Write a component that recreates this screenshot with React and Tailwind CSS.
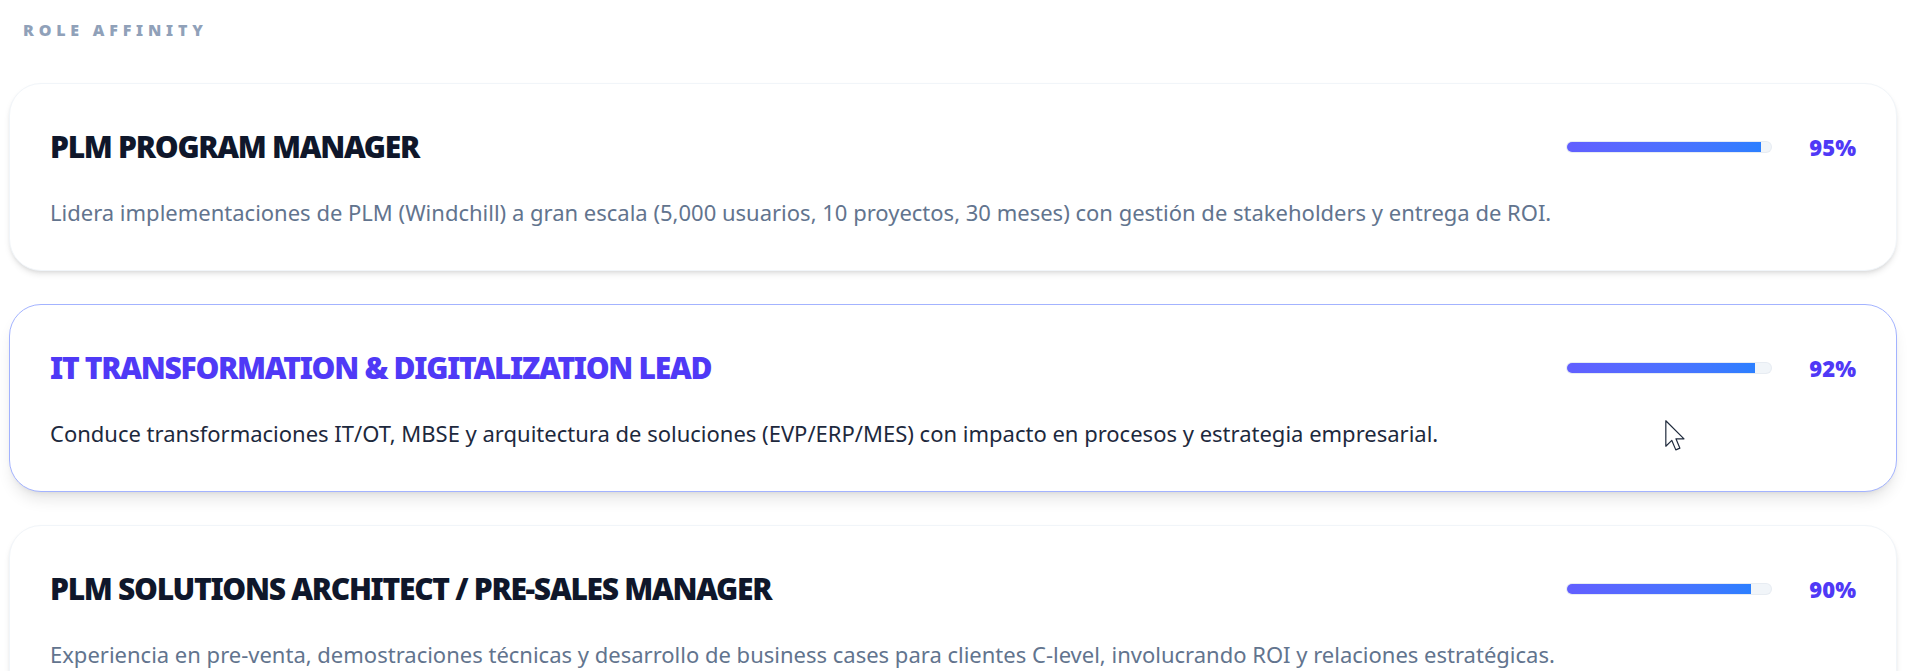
import React from "react";

const roles = [
  {
    title: "PLM PROGRAM MANAGER",
    desc: "Lidera implementaciones de PLM (Windchill) a gran escala (5,000 usuarios, 10 proyectos, 30 meses) con gestión de stakeholders y entrega de ROI.",
    pct: 95,
    active: false,
  },
  {
    title: "IT TRANSFORMATION & DIGITALIZATION LEAD",
    desc: "Conduce transformaciones IT/OT, MBSE y arquitectura de soluciones (EVP/ERP/MES) con impacto en procesos y estrategia empresarial.",
    pct: 92,
    active: true,
  },
  {
    title: "PLM SOLUTIONS ARCHITECT / PRE-SALES MANAGER",
    desc: "Experiencia en pre-venta, demostraciones técnicas y desarrollo de business cases para clientes C-level, involucrando ROI y relaciones estratégicas.",
    pct: 90,
    active: false,
  },
];

function Cursor() {
  return (
    <svg
      className="absolute left-[1655px] top-[115px] pointer-events-none"
      width="20"
      height="31"
      viewBox="0 0 12.6 19.6"
    >
      <path
        d="M0.5 0.5 L0.5 16.6 L4.3 12.9 L6.8 18.9 L9.4 17.8 L6.9 11.9 L12 11.9 Z"
        fill="#ffffff"
        stroke="#1e293b"
        strokeWidth="0.75"
        strokeLinejoin="round"
      />
    </svg>
  );
}

function RoleCard({ role }) {
  return (
    <div
      className={
        role.active
          ? "relative rounded-[32px] border border-indigo-300 bg-white px-10 pt-[45px] pb-[42px] shadow-lg"
          : "relative rounded-[32px] border border-slate-100 bg-white px-10 pt-[45px] pb-[42px] shadow-md"
      }
    >
      <div className="flex h-9 items-center justify-between">
        <h3
          className={
            role.active
              ? "text-[30px] leading-9 font-black tracking-[-0.043em] text-indigo-600"
              : "text-[30px] leading-9 font-black tracking-[-0.043em] text-slate-900"
          }
        >
          {role.title}
        </h3>
        <div className="flex items-center gap-[37px]">
          <div className="h-3 w-[206px] overflow-hidden rounded-full border border-slate-200/70 bg-slate-100">
            <div
              className="h-full bg-gradient-to-r from-indigo-500 to-blue-500"
              style={{ width: `${role.pct}%` }}
            />
          </div>
          <span className="text-[22px] leading-8 font-black text-indigo-600">
            {role.pct}%
          </span>
        </div>
      </div>
      <p
        className={
          role.active
            ? "mt-[31px] text-[22px] leading-8 text-slate-800"
            : "mt-[31px] text-[22px] leading-8 text-slate-500"
        }
      >
        {role.desc}
      </p>
      {role.active && <Cursor />}
    </div>
  );
}

export default function App() {
  return (
    <div className="min-h-screen bg-white font-['Noto_Sans',sans-serif]">
      <div className="pl-[9px] pr-[23px]">
        <div className="pl-[14px] pt-[20px] text-[16px] leading-5 font-black tracking-[0.3em] text-slate-400">
          ROLE AFFINITY
        </div>
        <div className="mt-[43px] flex flex-col gap-[33px]">
          {roles.map((r) => (
            <RoleCard key={r.title} role={r} />
          ))}
        </div>
      </div>
    </div>
  );
}
